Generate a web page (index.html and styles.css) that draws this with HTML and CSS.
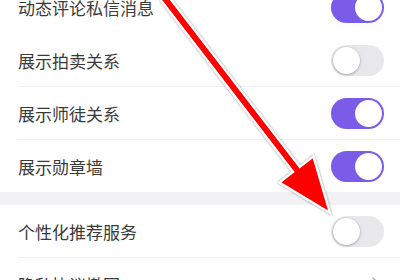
FILE: index.html
```html
<!DOCTYPE html>
<html lang="zh">
<head>
<meta charset="utf-8">
<link rel="stylesheet" href="styles.css">
</head>
<body>
<div class="page">
  <div class="group">
    <div class="row first"><span class="label">动态评论私信消息</span><span class="toggle on"><span class="knob"></span></span></div>
    <div class="row"><span class="label">展示拍卖关系</span><span class="toggle"><span class="knob"></span></span></div>
    <div class="row"><span class="label">展示师徒关系</span><span class="toggle on"><span class="knob"></span></span></div>
    <div class="row last"><span class="label">展示勋章墙</span><span class="toggle on"><span class="knob"></span></span></div>
  </div>
  <div class="gap"></div>
  <div class="group">
    <div class="row"><span class="label">个性化推荐服务</span><span class="toggle"><span class="knob"></span></span></div>
    <div class="row last"><span class="label">隐私协议撤回</span>
      <svg class="chev" width="8" height="14" viewBox="0 0 8 14"><path d="M1 1 L7 7 L1 13" fill="none" stroke="#b5b5b5" stroke-width="1.6" stroke-linecap="round" stroke-linejoin="round"/></svg>
    </div>
  </div>
  <svg class="arrow" width="400" height="280" viewBox="0 0 400 280">
    <polygon points="162.1,-12.0 299.8,166.9 313.4,156.3 330,213 279.4,182.5 293.0,171.9 155.3,-7.0" fill="#ff0000" stroke="#ffffff" stroke-width="2.4" stroke-linejoin="miter"/>
  </svg>
</div>
</body>
</html>
```
FILE: styles.css
```css
html, body {
  margin: 0;
  padding: 0;
  background: #ffffff;
}
.page {
  position: relative;
  width: 400px;
  height: 280px;
  overflow: hidden;
  font-family: "Noto Sans CJK SC", "Noto Sans", sans-serif;
}
.group {
  background: #ffffff;
  padding-left: 18px;
}
.group:first-child {
  margin-top: -19px;
}
.row {
  height: 52px;
  display: flex;
  align-items: center;
  justify-content: space-between;
  padding-right: 16px;
  border-bottom: 1px solid #efeff1;
}
.row.first {
  border-bottom-color: #ffffff;
}
.row.last {
  border-bottom: none;
}
.label {
  font-size: 17px;
  color: #3a3a3a;
}
.gap {
  height: 13px;
  background: #f2f2f5;
}
.toggle {
  width: 53px;
  height: 31px;
  border-radius: 16px;
  background: #e8e8ea;
  display: flex;
  align-items: center;
  padding: 0 2px;
  box-sizing: border-box;
}
.toggle .knob {
  width: 27px;
  height: 27px;
  border-radius: 50%;
  background: #ffffff;
  box-shadow: 0 1px 3px rgba(0, 0, 0, 0.25), 0 0 0 0.5px rgba(0, 0, 0, 0.08);
}
.toggle.on {
  background: #7b5ce8;
  justify-content: flex-end;
}
.toggle.on .knob {
  box-shadow: none;
}
.chev {
  margin-right: 4px;
}
.arrow {
  position: absolute;
  left: 0;
  top: 0;
  filter: drop-shadow(0 0 1px rgba(0, 0, 0, 0.45));
}
```
